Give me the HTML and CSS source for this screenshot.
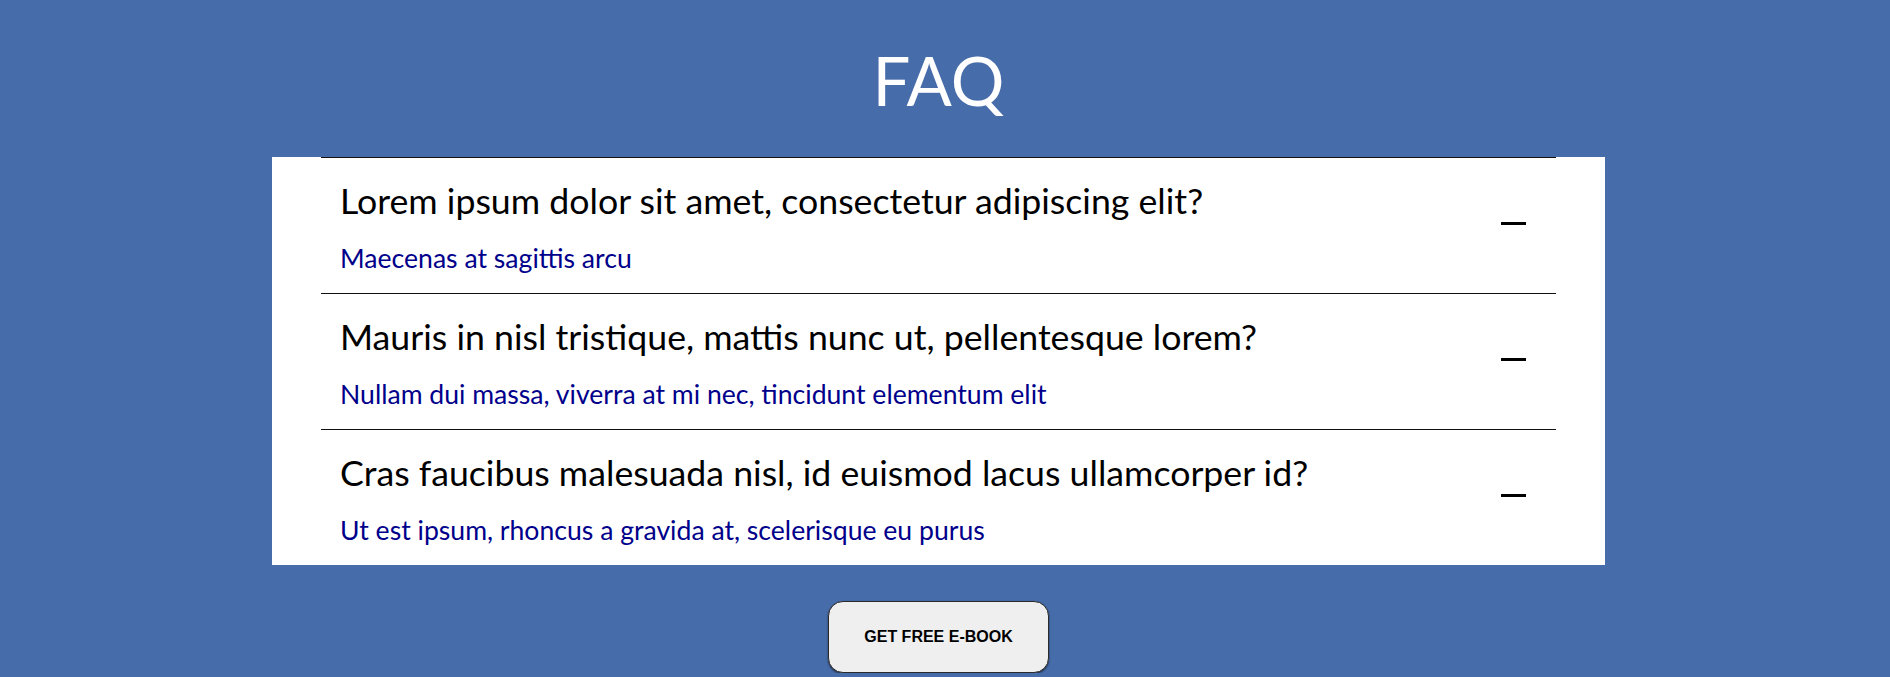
FILE: index.html
```html
<!DOCTYPE html>
<html lang="en">
<head>
<meta charset="utf-8">
<title>FAQ</title>
<link rel="stylesheet" href="styles.css">
</head>
<body>
<main class="page">
  <h1 class="title">FAQ</h1>
  <section class="faq">
    <div class="item">
      <div class="text">
        <h2 class="question">Lorem ipsum dolor sit amet, consectetur adipiscing elit?</h2>
        <p class="answer">Maecenas at sagittis arcu</p>
      </div>
      <span class="toggle"></span>
    </div>
    <div class="item">
      <div class="text">
        <h2 class="question">Mauris in nisl tristique, mattis nunc ut, pellentesque lorem?</h2>
        <p class="answer">Nullam dui massa, viverra at mi nec, tincidunt elementum elit</p>
      </div>
      <span class="toggle"></span>
    </div>
    <div class="item">
      <div class="text">
        <h2 class="question">Cras faucibus malesuada nisl, id euismod lacus ullamcorper id?</h2>
        <p class="answer">Ut est ipsum, rhoncus a gravida at, scelerisque eu purus</p>
      </div>
      <span class="toggle"></span>
    </div>
  </section>
  <div class="cta">
    <button class="btn" type="button">Get free e-book</button>
  </div>
</main>
</body>
</html>
```

FILE: styles.css
```css
html, body {
  margin: 0;
  padding: 0;
}

body {
  background: #476caa;
  font-family: Lato, "Open Sans", sans-serif;
  overflow: hidden;
}

.page {
  width: 1877px;
  display: flex;
  flex-direction: column;
  align-items: center;
}

.title {
  margin: 46px 0 43px;
  font-size: 67px;
  line-height: 68px;
  font-weight: 400;
  color: #ffffff;
}

.faq {
  width: 1333px;
  box-sizing: border-box;
  padding: 0 49px;
  background: #ffffff;
}

.item {
  display: flex;
  align-items: center;
  border-top: 1px solid #111;
}

.text {
  flex: 1;
  padding: 23px 0 19px 19px;
}

.question {
  margin: 0 0 21px;
  font-size: 35.7px;
  line-height: 40px;
  font-weight: 400;
  color: #000;
}

.answer {
  margin: 0;
  font-size: 26.6px;
  line-height: 32px;
  color: #00008b;
}

.toggle {
  width: 25px;
  height: 3px;
  margin: 0 30px 4px 0;
  background: #000;
}

.cta {
  margin-top: 36px;
}

.btn {
  width: 221px;
  height: 72px;
  border: 1px solid #2a2a2a;
  border-radius: 15px;
  background: #efefef;
  box-shadow: 0 1px 2px rgba(0, 0, 0, 0.6);
  font-family: "Liberation Sans", Arial, sans-serif;
  font-size: 16px;
  font-weight: 700;
  text-transform: uppercase;
  color: #000;
}
```
